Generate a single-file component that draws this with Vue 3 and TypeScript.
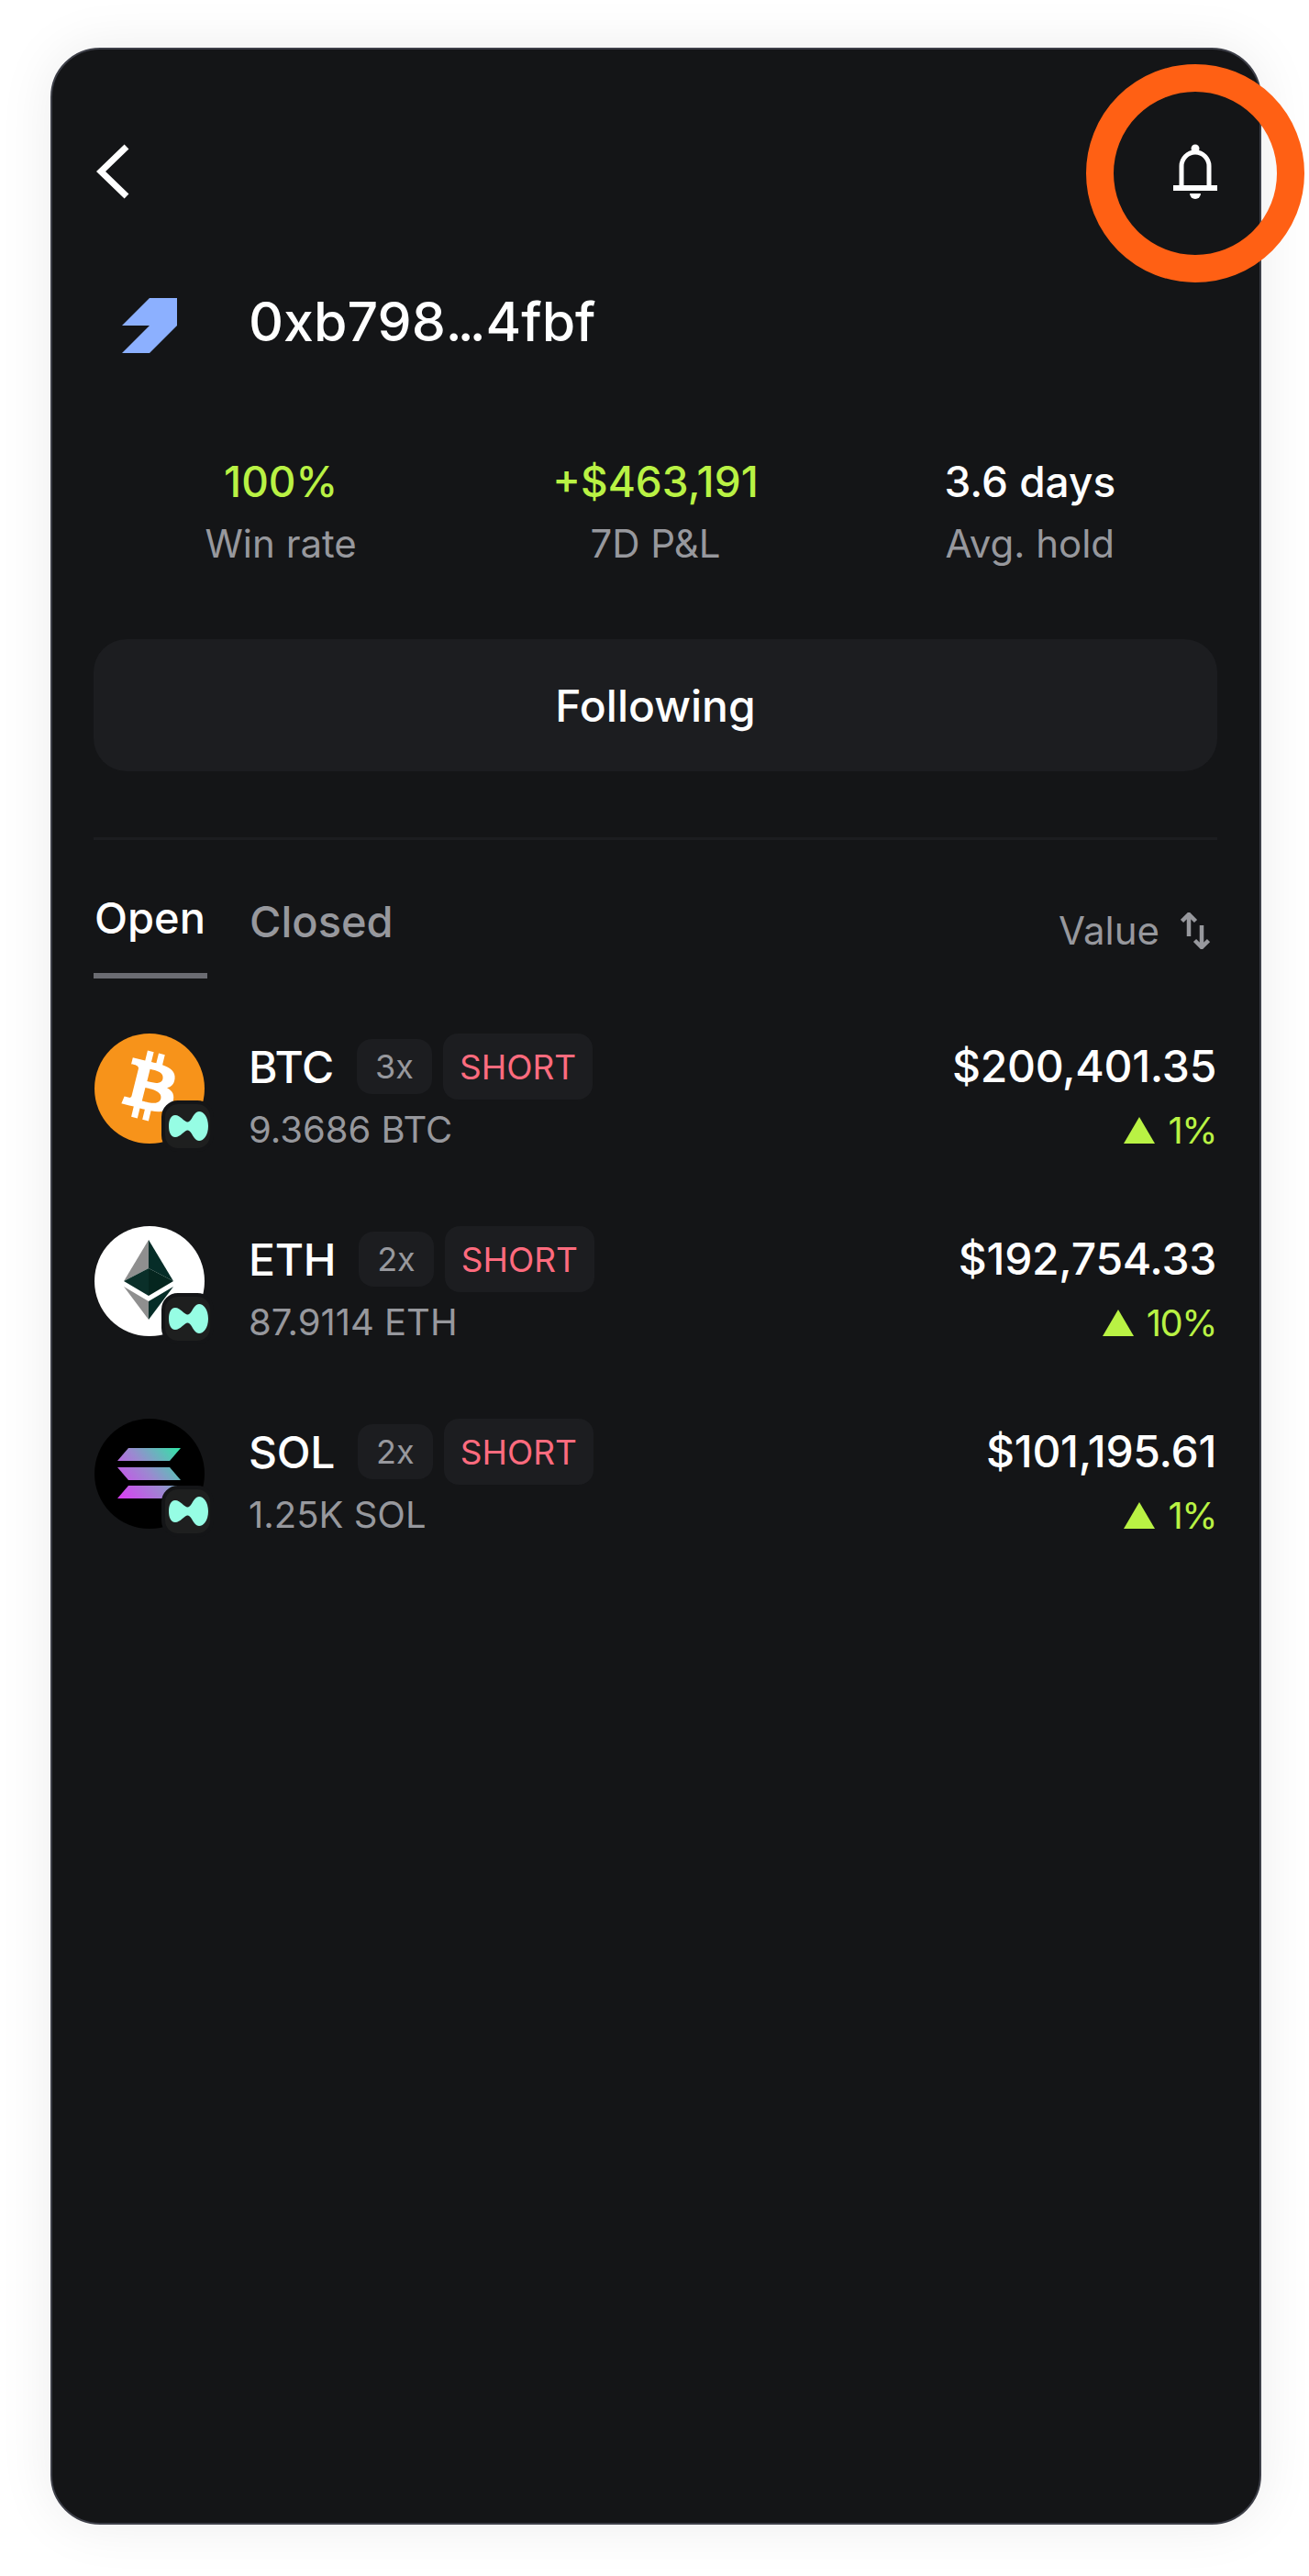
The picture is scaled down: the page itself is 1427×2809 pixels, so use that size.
<script setup lang="ts">
interface Position {
  symbol: string
  leverage: string
  size: string
  value: string
  change: string
}

const stats = [
  { value: '100%', label: 'Win rate', green: true },
  { value: '+$463,191', label: '7D P&L', green: true },
  { value: '3.6 days', label: 'Avg. hold', green: false },
]

const positions: Position[] = [
  { symbol: 'BTC', leverage: '3x', size: '9.3686 BTC', value: '$200,401.35', change: '1%' },
  { symbol: 'ETH', leverage: '2x', size: '87.9114 ETH', value: '$192,754.33', change: '10%' },
  { symbol: 'SOL', leverage: '2x', size: '1.25K SOL', value: '$101,195.61', change: '1%' },
]
</script>

<template>
  <div class="page">
    <div class="phone">
      <div class="topbar">
        <svg class="back" width="36" height="60" viewBox="0 0 36 60">
          <path d="M33 3 L5 30 L33 57" fill="none" stroke="#fff" stroke-width="7" />
        </svg>
        <svg class="bell" width="48" height="60" viewBox="0 0 48 60">
          <circle cx="24" cy="5" r="4.5" fill="#fff" />
          <path d="M9 46V24a15 15 0 0 1 30 0V46" fill="none" stroke="#fff" stroke-width="5" />
          <rect x="0" y="45" width="48" height="6" fill="#fff" />
          <path d="M18 54h12a6 6 0 0 1-12 0z" fill="#fff" />
        </svg>
      </div>

      <div class="identity">
        <svg width="60" height="60" viewBox="0 0 60 60">
          <polygon points="30,0 60,0 60,30 30,60 0,60 30,30 0,30" fill="#8cb0ff" />
        </svg>
        <span class="address">0xb798<span class="dots">...</span>4fbf</span>
      </div>

      <div class="stats">
        <div v-for="s in stats" :key="s.label" class="stat">
          <div class="stat-value" :class="{ green: s.green }">{{ s.value }}</div>
          <div class="stat-label">{{ s.label }}</div>
        </div>
      </div>

      <button class="follow">Following</button>
      <div class="divider"></div>

      <div class="tabs">
        <div class="tab active">Open</div>
        <div class="tab">Closed</div>
        <div class="sort">
          <span>Value</span>
          <svg width="32" height="40" viewBox="0 0 32 40">
            <path d="M9 1V26M1.500 9.500L9 2l7.500 7.500M23 14V39M15.500 30.500L23 38l7.500-7.500" fill="none" stroke="#97989d" stroke-width="4.500" />
          </svg>
        </div>
      </div>

      <div class="list">
        <div v-for="p in positions" :key="p.symbol" class="row">
          <div class="coin">
            <svg v-if="p.symbol === 'BTC'" width="120" height="120" viewBox="0 0 120 120">
              <circle cx="60" cy="60" r="60" fill="#f7931a" />
              <g transform="translate(-1 -3) scale(1.92)">
                <path fill="#fff" d="M46.100 27.400c.6-4.200-2.600-6.500-7-8l1.400-5.700-3.500-.9-1.400 5.600c-.9-.2-1.900-.4-2.800-.7l1.400-5.600-3.500-.9-1.400 5.700c-.8-.2-1.500-.3-2.200-.5l-4.800-1.200-.9 3.700s2.600.6 2.500.6c1.400.4 1.700 1.300 1.600 2l-3.900 15.600c-.2.400-.6 1.100-1.600.8 0 .1-2.500-.6-2.500-.6l-1.700 4 4.500 1.100c.8.2 1.700.4 2.500.6l-1.400 5.800 3.500.9 1.400-5.700c.9.300 1.900.5 2.800.7l-1.400 5.700 3.500.9 1.400-5.800c5.900 1.100 10.400.7 12.300-4.700 1.500-4.300-.1-6.800-3.200-8.400 2.300-.5 4-2 4.400-5.100zm-7.900 11.100c-1.100 4.300-8.300 2-10.700 1.400l1.900-7.600c2.400.6 9.900 1.800 8.800 6.200zm1.100-11.200c-1 3.900-7 1.900-8.900 1.400l1.700-6.900c1.900.5 8.200 1.400 7.200 5.500z" />
              </g>
            </svg>
            <svg v-else-if="p.symbol === 'ETH'" width="120" height="120" viewBox="0 0 120 120">
              <circle cx="60" cy="60" r="60" fill="#fff" />
              <polygon points="59,15 32,60 59,46" fill="#8f8f8f" />
              <polygon points="59,15 86,60 59,46" fill="#062d28" />
              <polygon points="32,60 59,46 59,76" fill="#0a2f29" />
              <polygon points="86,60 59,46 59,76" fill="#05261f" />
              <polygon points="32,66 59,82 59,102" fill="#8f8f8f" />
              <polygon points="86,66 59,82 59,102" fill="#062d28" />
            </svg>
            <svg v-else width="120" height="120" viewBox="0 0 120 120">
              <defs>
                <linearGradient id="sol" gradientUnits="userSpaceOnUse" x1="26" y1="88" x2="94" y2="32">
                  <stop offset="0" stop-color="#dc3cf5" />
                  <stop offset="0.5" stop-color="#9a8ad0" />
                  <stop offset="1" stop-color="#2fe6a6" />
                </linearGradient>
              </defs>
              <circle cx="60" cy="60" r="60" fill="#000" />
              <polygon points="37,32 94,32 82,46 25,46" fill="url(#sol)" />
              <polygon points="25,53 82,53 94,67 37,67" fill="url(#sol)" />
              <polygon points="37,73 94,73 82,87 25,87" fill="url(#sol)" />
            </svg>
            <span class="venue">
              <svg width="49" height="48" viewBox="4 6 49 48">
                <path fill="#96fde4" d="M51 30C51 40 46 46 41 46C35 46 33 35 29 34.500C25 34 21 42 15 42C10 42 8 36 8 30C8 24 10 18 15 18C21 18 25 26 29 25.500C33 25 35 14 41 14C46 14 51 20 51 30Z" />
              </svg>
            </span>
          </div>

          <div class="info">
            <div class="title">
              <span class="symbol">{{ p.symbol }}</span>
              <span class="lev">{{ p.leverage }}</span>
              <span class="short">SHORT</span>
            </div>
            <div class="size">{{ p.size }}</div>
          </div>

          <div class="amounts">
            <div class="value">{{ p.value }}</div>
            <div class="change">
              <svg width="34" height="29" viewBox="0 0 34 29"><polygon points="17,0 34,29 0,29" fill="#b9f244" /></svg>
              <span>{{ p.change }}</span>
            </div>
          </div>
        </div>
      </div>

      <div class="ring"></div>
    </div>
  </div>
</template>

<style>
body {
  background: #fff;
}
</style>

<style scoped>
.page {
  padding: 52px 52px 56px 55px;
  font-family: Inter, "Liberation Sans", sans-serif;
}

.phone {
  position: relative;
  box-sizing: border-box;
  width: 1320px;
  height: 2701px;
  padding: 103px 46px 0 45px;
  background: #141517;
  border: 2px solid #3d3f48;
  border-radius: 54px;
  box-shadow: 0 0 60px rgba(0, 0, 0, 0.08);
}

.topbar {
  display: flex;
  justify-content: space-between;
  align-items: center;
  height: 60px;
}

.back {
  margin-left: 3px;
}

.identity {
  display: flex;
  align-items: flex-start;
  gap: 78px;
  margin-top: 108px;
  padding-left: 31px;
}

.address {
  color: #fff;
  font-size: 59px;
  font-weight: 450;
  line-height: 60px;
  margin-top: -4px;
}

.dots {
  letter-spacing: -5px;
  margin-right: 5px;
}

.stats {
  display: grid;
  grid-template-columns: repeat(3, 1fr);
  margin-top: 110px;
  text-align: center;
}

.stat-value {
  color: #fff;
  font-size: 46px;
  font-weight: 450;
  line-height: 60px;
}

.stat-value.green {
  color: #b9f244;
}

.stat-label {
  color: #97989d;
  font-size: 42px;
  line-height: 60px;
  margin-top: 8px;
}

.follow {
  display: block;
  width: 100%;
  height: 144px;
  margin-top: 74px;
  padding: 0;
  border: none;
  border-radius: 36px;
  background: #1c1d20;
  color: #fff;
  font-family: inherit;
  font-size: 48px;
  font-weight: 450;
}

.divider {
  height: 3px;
  margin-top: 72px;
  background: #1c1d20;
}

.tabs {
  display: flex;
  align-items: flex-start;
  gap: 46px;
  margin-top: 55px;
}

.tab {
  color: #97989d;
  font-size: 47px;
  font-weight: 450;
  line-height: 60px;
  padding-top: 4px;
}

.tab.active {
  color: #fff;
  padding: 0 2px 30px 1px;
  border-bottom: 6px solid #6b6c72;
}

.sort {
  display: flex;
  align-items: center;
  gap: 23px;
  margin-left: auto;
  margin-top: 19px;
  margin-right: 8px;
  color: #97989d;
  font-size: 42px;
  line-height: 50px;
}

.list {
  margin-top: 60px;
}

.row {
  display: flex;
  height: 210px;
}

.coin {
  position: relative;
  flex: none;
  width: 120px;
  height: 120px;
  margin-left: 1px;
}

.coin > svg {
  display: block;
}

.venue {
  position: absolute;
  left: 73px;
  top: 73px;
  box-sizing: border-box;
  width: 57px;
  height: 56px;
  display: flex;
  align-items: center;
  justify-content: center;
  background: #1e1f1f;
  border: 4px solid #141517;
  border-radius: 18px;
}

.info {
  margin-left: 48px;
}

.title {
  display: flex;
  align-items: center;
  height: 72px;
}

.symbol {
  color: #fff;
  font-size: 48px;
  font-weight: 450;
  letter-spacing: -0.3px;
  margin-right: 25px;
}

.lev {
  display: flex;
  align-items: center;
  height: 60px;
  padding: 0 20px;
  border-radius: 16px;
  background: #1c1d20;
  color: #97989d;
  font-size: 36px;
  margin-right: 12px;
}

.short {
  display: flex;
  align-items: center;
  height: 72px;
  padding: 0 18px;
  border-radius: 16px;
  background: #1c1d20;
  color: #ff6b7e;
  font-size: 37px;
}

.size {
  color: #97989d;
  font-size: 40px;
  line-height: 50px;
  margin-top: 8px;
}

.amounts {
  margin-left: auto;
  padding-right: 1px;
  text-align: right;
}

.value {
  color: #fff;
  font-size: 48px;
  font-weight: 450;
  letter-spacing: -0.3px;
  line-height: 72px;
}

.change {
  display: flex;
  justify-content: flex-end;
  align-items: center;
  gap: 14px;
  height: 50px;
  margin-top: 8px;
  color: #b9f244;
  font-size: 40px;
  letter-spacing: -1.500px;
}

.ring {
  position: absolute;
  top: 16px;
  right: -49px;
  box-sizing: border-box;
  width: 238px;
  height: 238px;
  border: 30px solid #ff6014;
  border-radius: 50%;
}
</style>
